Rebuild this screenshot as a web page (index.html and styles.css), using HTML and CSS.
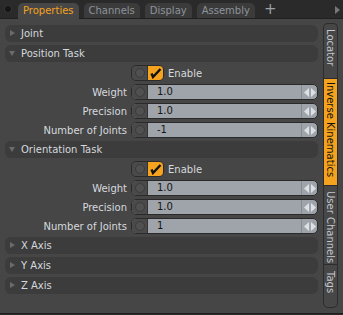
FILE: index.html
```html
<!DOCTYPE html>
<html lang="en">

<head>
    <meta charset="UTF-8">
    <title>Properties</title>
    <link rel="stylesheet" href="styles.css">
</head>

<body>
    <div class="tabbar">
        <span class="dot"></span>
        <div class="tab active">Properties</div>
        <div class="tab">Channels</div>
        <div class="tab">Display</div>
        <div class="tab">Assembly</div>
        <span class="plus">+</span>
        <span class="arrow"></span>
    </div>

    <div class="main">
        <div class="panel">
            <div class="group">Joint</div>
            <div class="group open">Position Task</div>

            <div class="row">
                <div class="label"></div>
                <div class="check">
                    <span class="knob"><i></i></span>
                    <span class="box">
                        <svg width="13" height="12" viewBox="0 0 13 12">
                            <path d="M2.5 6.5 L4 10 L11.5 2" fill="none" stroke="#111" stroke-width="2.4" />
                        </svg>
                    </span>
                </div>
                <span class="check_label">Enable</span>
            </div>
            <div class="row">
                <div class="label">Weight</div>
                <div class="field">
                    <span class="knob"><i></i></span>
                    <span class="value">1.0</span>
                    <span class="spin"><svg width="12" height="9" viewBox="0 0 12 9"><path d="M0 4.5 L5 0 V9 Z M12 4.5 L7 0 V9 Z" fill="#dde1e5" /></svg></span>
                </div>
            </div>
            <div class="row">
                <div class="label">Precision</div>
                <div class="field">
                    <span class="knob"><i></i></span>
                    <span class="value">1.0</span>
                    <span class="spin"><svg width="12" height="9" viewBox="0 0 12 9"><path d="M0 4.5 L5 0 V9 Z M12 4.5 L7 0 V9 Z" fill="#dde1e5" /></svg></span>
                </div>
            </div>
            <div class="row">
                <div class="label">Number of Joints</div>
                <div class="field">
                    <span class="knob"><i></i></span>
                    <span class="value">-1</span>
                    <span class="spin"><svg width="12" height="9" viewBox="0 0 12 9"><path d="M0 4.5 L5 0 V9 Z M12 4.5 L7 0 V9 Z" fill="#dde1e5" /></svg></span>
                </div>
            </div>

            <div class="group open">Orientation Task</div>

            <div class="row">
                <div class="label"></div>
                <div class="check">
                    <span class="knob"><i></i></span>
                    <span class="box">
                        <svg width="13" height="12" viewBox="0 0 13 12">
                            <path d="M2.5 6.5 L4 10 L11.5 2" fill="none" stroke="#111" stroke-width="2.4" />
                        </svg>
                    </span>
                </div>
                <span class="check_label">Enable</span>
            </div>
            <div class="row">
                <div class="label">Weight</div>
                <div class="field">
                    <span class="knob"><i></i></span>
                    <span class="value">1.0</span>
                    <span class="spin"><svg width="12" height="9" viewBox="0 0 12 9"><path d="M0 4.5 L5 0 V9 Z M12 4.5 L7 0 V9 Z" fill="#dde1e5" /></svg></span>
                </div>
            </div>
            <div class="row">
                <div class="label">Precision</div>
                <div class="field">
                    <span class="knob"><i></i></span>
                    <span class="value">1.0</span>
                    <span class="spin"><svg width="12" height="9" viewBox="0 0 12 9"><path d="M0 4.5 L5 0 V9 Z M12 4.5 L7 0 V9 Z" fill="#dde1e5" /></svg></span>
                </div>
            </div>
            <div class="row">
                <div class="label">Number of Joints</div>
                <div class="field">
                    <span class="knob"><i></i></span>
                    <span class="value">1</span>
                    <span class="spin"><svg width="12" height="9" viewBox="0 0 12 9"><path d="M0 4.5 L5 0 V9 Z M12 4.5 L7 0 V9 Z" fill="#dde1e5" /></svg></span>
                </div>
            </div>

            <div class="group">X Axis</div>
            <div class="group">Y Axis</div>
            <div class="group">Z Axis</div>
        </div>

        <div class="sidetabs">
            <div class="vtab locator">Locator</div>
            <div class="vtab ik active">Inverse Kinematics</div>
            <div class="vtab user">User Channels</div>
            <div class="vtab tags">Tags</div>
        </div>
    </div>
</body>

</html>
```

FILE: styles.css
```css
body {
    margin: 0;
    width: 343px;
    height: 315px;
    background: #2b2b2b;
    font-family: "DejaVu Sans", sans-serif;
    font-size: 10px;
    overflow: hidden;
}

/* top tab bar */
.tabbar {
    height: 19px;
    display: flex;
    align-items: flex-end;
    background: #2a2a2a;
    box-sizing: border-box;
    border-bottom: 1px solid #202020;
}

.dot {
    width: 6px;
    height: 6px;
    border-radius: 50%;
    background: #151515;
    box-shadow: 0 0 0 1px #333;
    margin: 0 7px 6px 5px;
}

.tab {
    height: 15px;
    line-height: 15px;
    padding: 0 5px;
    margin-right: 5px;
    background: #3b3b3b;
    color: #8d939a;
    font-size: 10px;
    border-radius: 5px 5px 0 0;
}

.tab.active {
    background: #474747;
    color: #f5a21e;
    height: 16px;
    margin-bottom: -1px;
}

.plus {
    color: #9aa0a6;
    font-size: 15px;
    line-height: 15px;
    margin: 0 0 1px 4px;
}

.arrow {
    margin: 0 3px 4px auto;
    width: 0;
    height: 0;
    border-left: 5px solid #777;
    border-top: 4px solid transparent;
    border-bottom: 4px solid transparent;
}

/* main area */
.main {
    display: flex;
    height: 294px;
    background: #464646;
    border-bottom: 1px solid #1e1e1e;
}

.panel {
    width: 313px;
    padding: 6px 2px 0 5px;
    display: flex;
    flex-direction: column;
    gap: 3px;
}

.group {
    height: 17px;
    line-height: 17px;
    background: #3c3c3c;
    border-radius: 6px;
    color: #d4d8dc;
    font-size: 10px;
    padding-left: 16px;
    position: relative;
}

.group::before {
    content: "";
    position: absolute;
    left: 5px;
    top: 5px;
    border-left: 5px solid #6b6b6b;
    border-top: 3.5px solid transparent;
    border-bottom: 3.5px solid transparent;
}

.group.open::before {
    left: 4px;
    top: 6px;
    border-top: 5px solid #6b6b6b;
    border-left: 3.5px solid transparent;
    border-right: 3.5px solid transparent;
    border-bottom: none;
}

.row {
    height: 16px;
    display: flex;
    align-items: center;
    gap: 4px;
}

.label {
    width: 122px;
    text-align: right;
    color: #d6dade;
    font-size: 10px;
    white-space: nowrap;
}

.check,
.field {
    height: 16px;
    box-sizing: border-box;
    border: 1px solid #2a2a2a;
    border-radius: 5px;
    display: flex;
    overflow: hidden;
}

.field {
    flex: 1;
    background: #9ea4aa;
}

.knob {
    width: 15px;
    background: #4a4a4a;
    display: flex;
    align-items: center;
    justify-content: center;
    border-right: 1px solid #333;
}

.knob i {
    width: 8px;
    height: 8px;
    border-radius: 50%;
    background: #505050;
    border: 1px solid #3c3c3c;
}

.box {
    width: 15px;
    background: #f5a21e;
    display: flex;
    align-items: center;
    justify-content: center;
}

.check_label {
    color: #d6dade;
    font-size: 10px;
}

.value {
    flex: 1;
    color: #151515;
    font-size: 10px;
    line-height: 14px;
    padding-left: 9px;
}

.spin {
    width: 15px;
    border-left: 1px solid #868b90;
    display: flex;
    align-items: center;
    justify-content: center;
}

/* right side vertical tabs */
.sidetabs {
    width: 15px;
    padding: 4px 5px 0 3px;
    display: flex;
    flex-direction: column;
}

.vtab {
    writing-mode: vertical-rl;
    white-space: nowrap;
    box-sizing: border-box;
    width: 15px;
    background: #474747;
    border: 1px solid #2c2c2c;
    border-bottom: none;
    color: #c2c8ce;
    font-size: 10px;
    line-height: 13px;
    padding-top: 5px;
}

.vtab.locator {
    height: 55px;
    border-radius: 5px 5px 0 0;
}

.vtab.ik {
    height: 107px;
    padding-top: 3px;
}

.vtab.user {
    height: 79px;
}

.vtab.tags {
    height: 44px;
    padding-top: 6px;
    border-bottom: 1px solid #2c2c2c;
    border-radius: 0 0 5px 5px;
}

.vtab.active {
    background: #f5a21e;
    color: #111;
}
```
